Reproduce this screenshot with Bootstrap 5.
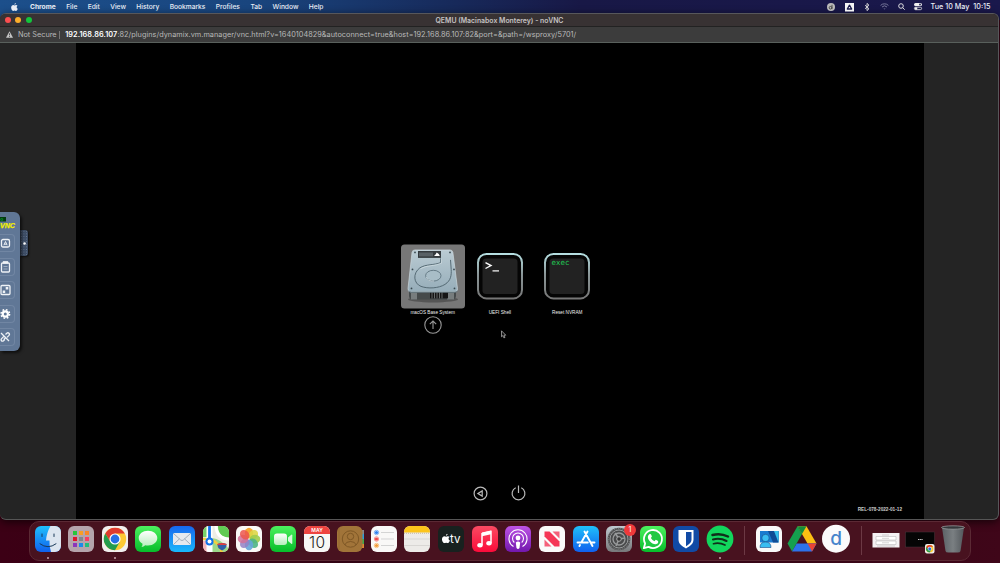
<!DOCTYPE html>
<html lang="en">
<head>
  <meta charset="UTF-8">
  <meta name="viewport" content="width=device-width, initial-scale=1.0">
  <title>QEMU (Macinabox Monterey) - noVNC</title>
  <link href="https://cdn.jsdelivr.net/npm/bootstrap@5.3.3/dist/css/bootstrap.min.css" rel="stylesheet">
  <style>
    body {
      width: 1000px;
      height: 563px;
      font-family: Inter, "Liberation Sans", sans-serif;
      background: linear-gradient(90deg, #1c4f8b 0, #19457e 25%, #172a5b 45%, #181846 58%, #1a184c 100%) 0 0 / 100% 20px no-repeat,
                  linear-gradient(90deg, #3c0015, #2e0513 50%, #3f0619);
    }
    svg { display: block; overflow: visible; }

    /* Menu bar */
    .menubar { height: 13px; font-size: 6.65px; line-height: 12px; color: #e9edf5; font-weight: 500; padding: 0 9.5px 0 11px; }
    .menus { gap: 10.45px; margin-left: 12px; padding-top: 1px; }
    .clock { font-size: 7.2px; white-space: pre; padding-top: 1px; }

    /* Browser window */
    .browser { height: 507px; width: 999px; border: 1px solid #57575b; border-left: 0; border-bottom-color: #555; border-radius: 6px; background: #242424; box-shadow: 0 2px 8px #000a; }
    .titlebar { height: 13px; background: #383233; border-bottom: 1px solid #222; font-size: 6.9px; color: #c6c3c3; font-weight: 600; }
    .titlebar .caption-text { padding-top: 2px; left: .5px; }
    .light { width: 6px; height: 6px; border-radius: 50%; }
    .urlbar { height: 16px; background: #3c3c3c; border-bottom: 1px solid #59605c; font-size: 7.3px; color: #b9b9b9; padding: 1.5px 0 0 6px; }
    .urlbar svg { margin-top: -1px; }
    .urlbar b { color: #fff; font-weight: 600; letter-spacing: .08px; }
    .url-text { letter-spacing: .04px; }

    /* noVNC control bar */
    .side { width: 76px; }
    .vnc-panel { width: 20px; height: 139px; margin-top: 169px; background: #607796; border-radius: 0 6px 6px 0; box-shadow: 2px 2px 3px #0009; position: relative; z-index: 1; }
    .vnc-btn { width: 15px; height: 18px; border: 1px solid #7186a3; border-left: 0; border-radius: 0 4px 4px 0; margin-bottom: 5.5px; }
    .vnc-handle { width: 8px; height: 26px; margin-top: 187px; border-radius: 0 3px 3px 0; background: radial-gradient(circle, #68788e 0 .5px, transparent .8px) 0 0 / 2.6px 2.6px, #3d4d66; box-shadow: 1px 1px 2px #0009; }

    /* Boot picker */
    .screen { width: 848px; background: #000; color: #ddd; }
    .picker { height: 101px; margin-top: 201px; }
    .entry { width: 67.3px; font-family: "Liberation Sans", sans-serif; font-size: 4.7px; line-height: 6px; text-align: center; color: #f0f0f0; }
    .entry-pic { height: 64px; margin-bottom: 1.5px; }
    .rel { font: 700 4.7px/6px "Liberation Sans", sans-serif; color: #ccc; }

    /* Dock */
    .dock { width: 942px; height: 40px; margin: 1px 0 0 29px; padding: 4px 0 0 .7px; background: #48121f; border: 1px solid #5b2934; border-radius: 10px; position: relative; }
    .app { width: 33.63px; height: 34px; flex: none; display: flex; justify-content: center; position: relative; }
    .app svg { width: 26px; height: 26px; }
    .app.running::after { content: ""; width: 2px; height: 2px; border-radius: 50%; background: #c9a5ae; position: absolute; top: 31px; }
    .split { width: 1px; height: 29px; background: #6c3944; flex: none; }
    .counter { width: 12px; height: 12px; border-radius: 50%; background: #f0393a; color: #fff; font-size: 7px; line-height: 12px; text-align: center; position: absolute; top: -2.5px; left: 21.5px; }
  </style>
</head>
<body class="overflow-hidden">

  <!-- Shared shapes -->
  <svg width="0" height="0" class="position-absolute">
    <defs>
      <linearGradient id="gBlue" x2="0" y2="1"><stop stop-color="#1fc0fb"/><stop offset="1" stop-color="#1060ee"/></linearGradient>
      <linearGradient id="gMail" x2="0" y2="1"><stop stop-color="#1667ee"/><stop offset="1" stop-color="#18b8fb"/></linearGradient>
      <linearGradient id="gGreen" x2="0" y2="1"><stop stop-color="#4cf15e"/><stop offset="1" stop-color="#06bd2a"/></linearGradient>
      <linearGradient id="gPod" x2="0" y2="1"><stop stop-color="#bd53e6"/><stop offset="1" stop-color="#7217ad"/></linearGradient>
      <linearGradient id="gMusic" x2="0" y2="1"><stop stop-color="#fb4a62"/><stop offset="1" stop-color="#fb0b3a"/></linearGradient>
      <linearGradient id="gBubble" x2="0" y2="1"><stop stop-color="#fff"/><stop offset="1" stop-color="#b5eebb"/></linearGradient>
      <linearGradient id="gGrey" x2="0" y2="1"><stop stop-color="#bfc9cf"/><stop offset="1" stop-color="#77787a"/></linearGradient>
      <linearGradient id="gDisk" x2="0" y2="1"><stop stop-color="#bacbd3"/><stop offset="1" stop-color="#96adb9"/></linearGradient>
      <linearGradient id="gKey" x2="0" y2="1"><stop stop-color="#b5dfe2"/><stop offset=".45" stop-color="#8b9799"/><stop offset="1" stop-color="#777"/></linearGradient>
      <linearGradient id="gTrash"><stop stop-color="#5b6165"/><stop offset=".5" stop-color="#7a7f82"/><stop offset="1" stop-color="#53585c"/></linearGradient>
      <clipPath id="tile"><rect width="26" height="26" rx="6"/></clipPath>
      <symbol id="apple" viewBox="0 0 14 16">
        <path fill="currentColor" d="M9.800 0c.1 1.600-1.200 3.300-2.800 3.400C6.800 1.800 8.200.2 9.800 0zM13 5.400c-2.500 1.600-2 4.900.6 5.900-.7 2-2.100 4.500-3.700 4.600-1.100 0-1.500-.7-2.800-.7s-1.800.7-2.800.7C2.100 15.900.2 12 .3 9.200.4 6 2.400 4.200 4.500 4.200c1.100 0 2 .8 2.700.8.6 0 1.900-.9 3.200-.8 1 0 2 .4 2.600 1.200z"/>
      </symbol>
      <symbol id="chrome" viewBox="-12 -12 24 24">
        <circle r="11.500" fill="#fcc934"/>
        <path fill="#de3b2f" d="M0-5.600H10A11.500 11.500 0 0 0-9.960-5.750L-4.800 2.800z"/>
        <path fill="#249c4e" d="M-9.960-5.750A11.500 11.500 0 0 0 0 11.500L4.900 2.900 0 3.500-4.800 2.800z"/>
        <circle r="5.700" fill="#fff"/><circle r="4.500" fill="#276fe6"/>
      </symbol>
    </defs>
  </svg>

  <!-- Menu bar -->
  <nav class="menubar d-flex align-items-center">
    <svg width="7" height="8"><use href="#apple" width="7" height="8"/></svg>
    <div class="menus d-flex">
      <span class="fw-bold">Chrome</span><span>File</span><span>Edit</span><span>View</span><span>History</span><span>Bookmarks</span><span>Profiles</span><span>Tab</span><span>Window</span><span>Help</span>
    </div>
    <div class="ms-auto d-flex align-items-center">
      <svg width="8" height="8" viewBox="0 0 8 8"><circle cx="4" cy="4" r="4" fill="#b9b9b9"/><circle cx="3.500" cy="4.700" r="1.300" fill="none" stroke="#333" stroke-width=".8"/><path d="M5 1.800v4.300" stroke="#333" stroke-width=".8"/></svg>
      <svg width="9" height="8" viewBox="0 0 9 8" style="margin-left:10px"><rect width="9" height="8.500" fill="#f4f4f4"/><path d="M4.500 2.200 6.700 6H2.300z" fill="none" stroke="#18184a" stroke-width="1.300" stroke-linejoin="round"/></svg>
      <svg width="6" height="8" viewBox="0 0 6 8" style="margin-left:10px"><path d="M1 2.200 5 5.800 3 7.600V.4L5 2.200 1 5.800" fill="none" stroke="#ddd" stroke-width=".9"/></svg>
      <svg width="9" height="7" viewBox="0 0 9 7" style="margin-left:10px" fill="none" stroke="#77779a"><path d="M.6 2.400a5.600 5.600 0 0 1 7.800 0M2 4a3.600 3.600 0 0 1 5 0"/><path d="M3.400 5.400h2.200L4.500 6.600z" fill="#77779a" stroke="none"/></svg>
      <svg width="7" height="7" viewBox="0 0 7 7" style="margin-left:9px" fill="none" stroke="#eee" stroke-width=".9"><circle cx="3" cy="3" r="2.300"/><path d="m4.700 4.700 2 2"/></svg>
      <svg width="8" height="7" viewBox="0 0 8 7" style="margin-left:9px"><rect width="8" height="3" rx="1.500" fill="#eee"/><circle cx="6" cy="1.500" r=".9" fill="#18184a"/><rect x=".4" y="4.200" width="7.200" height="2.500" rx="1.200" fill="none" stroke="#eee" stroke-width=".8"/><circle cx="2" cy="5.500" r="1.300" fill="#eee"/></svg>
      <span class="clock" style="margin-left:8.300px">Tue 10 May  10:15</span>
    </div>
  </nav>

  <!-- Browser window -->
  <main class="browser overflow-hidden">
    <div class="titlebar d-flex align-items-center position-relative">
      <div class="d-flex" style="gap:4.500px;margin-left:4.500px">
        <div class="light" style="background:#fc4e50"></div>
        <div class="light" style="background:#fdae2b"></div>
        <div class="light" style="background:#12c53c"></div>
      </div>
      <div class="caption-text position-absolute w-100 text-center">QEMU (Macinabox Monterey) - noVNC</div>
    </div>
    <div class="urlbar d-flex align-items-center text-nowrap">
      <svg width="7" height="7" viewBox="0 0 7 7"><path d="M3.500.2 7 6.700H0z" fill="#c5c5c5"/><path d="M3.500 2.300v2M3.500 5v.9" stroke="#3c3c3c" stroke-width=".8"/></svg>
      <span class="ns-label" style="margin-left:5px">Not Secure</span>
      <span style="margin:0 5px 0 2.500px;width:1px;height:8px;background:#777"></span>
      <span class="url-text"><b>192.168.86.107</b>:82/plugins/dynamix.vm.manager/vnc.html?v=1640104829&amp;autoconnect=true&amp;host=192.168.86.107:82&amp;port=&amp;path=/wsproxy/5701/</span>
    </div>

    <div class="d-flex" style="height:476px">
      <div class="side d-flex align-items-start">
        <div class="vnc-panel">
          <svg width="15" height="22" viewBox="0 0 15 22">
            <rect y="5" width="6" height="4.500" fill="#033c10"/>
            <text x=".3" y="8.700" font-family="Liberation Sans" font-weight="700" font-size="5" fill="#0a9a30">o</text>
            <text x="0" y="15.600" font-family="Liberation Sans" font-style="italic" font-weight="700" font-size="8" textLength="15" lengthAdjust="spacingAndGlyphs" fill="#f4f000" stroke="#f4f000" stroke-width=".25">VNC</text>
          </svg>
          <div class="vnc-btn"><svg width="13" height="18" viewBox="0 0 13 18" fill="none" stroke="#eef2f6" stroke-width="1.300"><rect x="1.500" y="4.500" width="8" height="7.500" rx="1.500"/><path d="M3.900 10.200 5.500 6.500l1.600 3.700M4.500 9.200h2" stroke-width="1"/></svg></div>
          <div class="vnc-btn"><svg width="13" height="18" viewBox="0 0 13 18" fill="none" stroke="#eef2f6" stroke-width="1.300"><rect x="1.500" y="4" width="8" height="9" rx="1"/><path d="M3.500 4V2.800h4V4z" fill="#eef2f6"/><path d="M3.500 7.500h4M3.500 10h4" stroke="#afbdcd" stroke-width=".8"/></svg></div>
          <div class="vnc-btn"><svg width="13" height="18" viewBox="0 0 13 18" fill="none" stroke="#eef2f6" stroke-width="1.300"><rect x="1" y="3.500" width="9" height="9" rx="1"/><path d="M5.700 5h2.600v2.500H5.700zM2.700 8.500h2.500V11H2.700z" fill="#eef2f6" stroke="none"/></svg></div>
          <div class="vnc-btn"><svg width="13" height="18" viewBox="0 0 13 18" fill="none" stroke="#fff"><circle cx="5.300" cy="8" r="2.600" stroke-width="2.200"/><circle cx="5.300" cy="8" r="4.300" stroke-width="1.500" stroke-dasharray="1.700 1.680"/></svg></div>
          <div class="vnc-btn"><svg width="13" height="18" viewBox="0 0 13 18" fill="none" stroke="#eef2f6" stroke-width="1.300"><path d="m5.500 5.500 1.300-1.300c1.500-1.300 3.500.7 2.200 2.200L7 8.400M4.800 10.500l-1.300 1.300C2 13.100.3 11.100 1.600 9.600l2-2M1 4l8 8M6 8.500 3.700 10.500"/></svg></div>
        </div>
        <div class="vnc-handle d-flex align-items-center justify-content-center"><svg width="3" height="3"><circle cx="1.500" cy="1.500" r="1.300" fill="#fff"/></svg></div>
      </div>

      <div class="screen d-flex flex-column">
        <!-- Boot entries -->
        <div class="picker d-flex" style="margin-left:323px">
          <div class="entry">
            <div class="entry-pic d-flex justify-content-center">
              <svg width="64" height="64" viewBox="0 -.4 64 64">
                <rect width="64" height="64" rx="3.500" fill="#777"/>
                <ellipse cx="32" cy="55" rx="25" ry="3" fill="#555"/>
                <path d="M8 44h47v7q0 4-4 4H12q-4 0-4-4z" fill="#454a4b"/>
                <path d="M10 48h6v7h-6zM46 48h7v7h-7z" fill="#777d7e"/>
                <path d="M29 47h18v7H29z" fill="#151515"/>
                <path d="M31 47v7m2.500-7v7m2.500-7v7m2.500-7v7m2.500-7v7" stroke="#7b8282" stroke-width=".8"/>
                <path d="M14 5.500h35q2.500 0 2.900 2.500L56.500 44q.4 3.500-2.500 3.500H9.500Q6.700 47.500 7 44L11 8q.3-2.500 3-2.500z" fill="url(#gDisk)" stroke="#d5e1e5" stroke-width=".6"/>
                <path d="M7.500 46.500q1 1.300 3 1.300H54q2 0 2.400-1.500" fill="none" stroke="#5d7079"/>
                <path d="M17 6.500h23v7H17z" fill="#343a3e"/><path d="M18 8h14v4H18z" fill="#596166"/><path d="M33 11.700q2-2 2.700-3.700 2.800 1 3 3.700z" fill="#fff"/>
                <path d="M39.700 14v4.200C33 21 25 19.500 18.800 23.500 11.500 29 12.500 39 20 42c7 2.500 17.500 2 24-2 6-4 6.500-9 6.200-15l-.7-9.500" fill="none" stroke="#4c616b" stroke-width=".9"/>
                <path d="M40.500 14v4.700C33.500 22 25.500 20.500 19.500 24.300" fill="none" stroke="#e4eef1" stroke-width=".5"/>
                <ellipse cx="32.300" cy="31.300" rx="7.700" ry="5.400" fill="#a8bdc7" stroke="#566b76" stroke-width=".8"/>
                <path d="M25 32.500q2 4.800 8 4.200" fill="none" stroke="#e5eff2" stroke-width=".6"/>
                <g fill="#394950"><circle cx="14" cy="8" r=".9"/><circle cx="49" cy="8" r=".9"/><circle cx="11.500" cy="25" r=".9"/><circle cx="53" cy="25" r=".9"/><circle cx="10.500" cy="44" r=".9"/><circle cx="53.500" cy="44" r=".9"/></g>
              </svg>
            </div>
            <div>macOS Base System</div>
            <svg class="mx-auto" width="18" height="18" viewBox="0 0 18 18" fill="none" stroke="#999" stroke-width="1.100" style="margin-top:.5px"><circle cx="9" cy="9" r="8.200"/><path d="M9 13V5M5.800 8.200 9 5l3.200 3.200"/></svg>
          </div>
          <div class="entry">
            <div class="entry-pic d-flex justify-content-center">
              <svg width="64" height="64" viewBox="0 -.4 64 64">
                <rect x="10" y="9.500" width="44" height="44.500" rx="8.500" fill="#050505" stroke="url(#gKey)" stroke-width="2"/>
                <rect x="14.500" y="14" width="35" height="35.500" rx="3.500" fill="#222"/>
                <path d="m17.500 18.300 5.500 2.900-5.500 2.900" fill="none" stroke="#fff" stroke-width="1.400"/><path d="M24.500 26.500h6.500" stroke="#fff" stroke-width="1.200"/>
              </svg>
            </div>
            <div>UEFI Shell</div>
          </div>
          <div class="entry">
            <div class="entry-pic d-flex justify-content-center">
              <svg width="64" height="64" viewBox="0 -.4 64 64">
                <rect x="10" y="9.500" width="44" height="44.500" rx="8.500" fill="#050505" stroke="url(#gKey)" stroke-width="2"/>
                <rect x="14.500" y="14" width="35" height="35.500" rx="3.500" fill="#222"/>
                <text x="16.500" y="20.700" font-family="DejaVu Sans Mono" font-size="7.400" fill="#20cd55" textLength="18">exec</text>
              </svg>
            </div>
            <div>Reset NVRAM</div>
          </div>
        </div>

        <!-- Mouse pointer over the guest screen -->
        <svg class="position-absolute" width="6" height="9" viewBox="0 0 6 9" style="left:501px;top:329.500px"><path d="M.5.8v6l1.400-1.200 1 2.300 1.100-.5L3 5.200h1.800z" fill="#111" stroke="#bbb" stroke-width=".7"/></svg>

        <!-- Restart and power -->
        <div class="mt-auto d-flex" style="gap:23px;margin-left:397px">
          <svg width="15" height="15" viewBox="0 0 15 15" fill="none" stroke="#bbb" stroke-width="1.200"><circle cx="7.500" cy="7.500" r="6.400"/><path d="M9.200 4.900v5.200L4.900 7.500z"/></svg>
          <svg width="15" height="15" viewBox="0 0 15 15" fill="none" stroke="#bbb" stroke-width="1.200"><path d="M4.700 1.700a6.400 6.400 0 1 0 5.600 0M7.500-.5v7.500"/></svg>
        </div>
        <div class="rel text-end" style="margin:6px 22px 6.500px 0">REL-078-2022-01-12</div>
      </div>
    </div>
  </main>

  <!-- Dock -->
  <footer class="dock d-flex">
    <div class="app running"><svg viewBox="0 0 26 26"><g clip-path="url(#tile)"><rect width="26" height="26" fill="url(#gBlue)"/><path d="M15.500 0Q11.500 7 11 14.500h3.500Q14 20 16 26h10V0z" fill="#dce5ef"/></g><path d="M7 8v2.500M19 8v2.500M5 17.800q8 6 16 0" fill="none" stroke="#193957" stroke-width="1" stroke-linecap="round"/></svg></div>
    <div class="app"><svg viewBox="0 0 26 26"><rect width="26" height="26" rx="6" fill="#b5a4ac"/><g><path fill="#27c73b" d="M5 5h4v4H5z"/><path fill="#f79e25" d="M11 5h4v4h-4z"/><path fill="#fa8627" d="M17 5h4v4h-4z"/><path fill="#e0142e" d="M5 11h4v4H5z"/><path fill="#80868e" d="M11 11h4v4h-4z"/><path fill="#f73f64" d="M17 11h4v4h-4z"/><path fill="#8c36bb" d="M5 17h4v4H5z"/><path fill="#1b8bea" d="M11 17h4v4h-4z"/><path fill="#22bd7c" d="M17 17h4v4h-4z"/></g></svg></div>
    <div class="app running"><svg viewBox="0 0 26 26"><rect width="26" height="26" rx="6" fill="#f1efee"/><use href="#chrome" x="1.300" y="1.300" width="23.400" height="23.400"/></svg></div>
    <div class="app"><svg viewBox="0 0 26 26"><rect width="26" height="26" rx="6" fill="url(#gGreen)"/><path d="M13 4.700c5.200 0 9.300 3.200 9.300 7.400s-4.100 7.500-9.300 7.500q-1.500 0-2.800-.4-1.600 1.600-3.700 1.700 1.200-1.300 1-3.200-3.800-2-3.800-5.600C3.700 7.900 7.800 4.700 13 4.700z" fill="url(#gBubble)"/></svg></div>
    <div class="app"><svg viewBox="0 0 26 26"><rect width="26" height="26" rx="6" fill="url(#gMail)"/><rect x="4" y="7" width="18" height="12" rx="1.500" fill="#e4e9ee"/><path d="m4.500 7.500 7.200 6.500q1.300 1 2.600 0l7.200-6.500M4.500 18.500l6-5.700M21.500 18.500l-6-5.700" fill="none" stroke="#8d9eaf" stroke-width=".8"/></svg></div>
    <div class="app"><svg viewBox="0 0 26 26"><g clip-path="url(#tile)"><rect width="26" height="26" fill="#eeede5"/><path d="M15 0h11v12Q15 11 15 0z" fill="#61ca53"/><path d="M9 12q9 1 17 11v3H9z" fill="#9bd88a"/><path d="M0 15h6v11H0z" fill="#f6b6bb"/><path d="M0 0h4v11H0z" fill="#77d26a"/><path d="M13-1q0 14 14 14" fill="none" stroke="#fff" stroke-width="3"/><path d="M0 13q15-1 19 14" fill="none" stroke="#f4cf3f" stroke-width="2.500"/><path d="M6.500 0v26" stroke="#fff" stroke-width="6"/><path d="M6.500 0v15" stroke="#1473e9" stroke-width="2.800"/><circle cx="6.500" cy="15.500" r="4" fill="#1473e9"/><circle cx="6.500" cy="15.500" r="2" fill="#fff"/><path d="M14.500 18q4.500-2 9 0 .5 4.500-4.500 6.500-5-2-4.500-6.500z" fill="#305fa8"/><path d="M14.500 18q4.500-2 9 0v1h-9z" fill="#dd4040"/></g></svg></div>
    <div class="app"><svg viewBox="0 0 26 26"><rect width="26" height="26" rx="6" fill="#faf9f7"/><g opacity=".9"><ellipse cx="13" cy="7" rx="4.200" ry="5.300" fill="#f6a023"/><ellipse cx="13" cy="7" rx="4.200" ry="5.300" fill="#dcd334" transform="rotate(45 13 13)" opacity=".9"/><ellipse cx="13" cy="7" rx="4.200" ry="5.300" fill="#96c83b" transform="rotate(90 13 13)" opacity=".9"/><ellipse cx="13" cy="7" rx="4.200" ry="5.300" fill="#3cad79" transform="rotate(135 13 13)" opacity=".9"/><ellipse cx="13" cy="7" rx="4.200" ry="5.300" fill="#579cd6" transform="rotate(180 13 13)" opacity=".9"/><ellipse cx="13" cy="7" rx="4.200" ry="5.300" fill="#8875c1" transform="rotate(225 13 13)" opacity=".85"/><ellipse cx="13" cy="7" rx="4.200" ry="5.300" fill="#cf638f" transform="rotate(270 13 13)" opacity=".85"/><ellipse cx="13" cy="7" rx="4.200" ry="5.300" fill="#ec463c" transform="rotate(315 13 13)" opacity=".85"/></g></svg></div>
    <div class="app"><svg viewBox="0 0 26 26"><rect width="26" height="26" rx="6" fill="url(#gGreen)"/><rect x="4" y="7.500" width="13" height="11.500" rx="3" fill="url(#gBubble)"/><path d="m18 11.500 3.300-2.800q1-.6 1 .5v8q0 1.100-1 .5L18 15z" fill="#d8f8dc"/></svg></div>
    <div class="app"><svg viewBox="0 0 26 26"><g clip-path="url(#tile)"><rect width="26" height="26" fill="#f8f7f5"/><rect width="26" height="8" fill="#ee4440"/></g><text x="13" y="6.300" text-anchor="middle" font-size="5" font-weight="600" fill="#fff">MAY</text><text x="13" y="21.500" text-anchor="middle" font-size="15.500" font-weight="300" textLength="16" fill="#222">10</text></svg></div>
    <div class="app"><svg viewBox="0 0 26 26"><path d="M20 4h7v4h-7z" fill="#888"/><path d="M20 8h7v5h-7z" fill="#2b9fd8"/><path d="M20 13h7v5h-7z" fill="#43a94b"/><path d="M20 18h7v4h-7z" fill="#e08731"/><rect width="25.500" height="26" rx="6" fill="#a17439"/><path d="M2 2v22" stroke="#8d622c" stroke-width=".7"/><g fill="none" stroke="#795323" stroke-width=".9"><circle cx="13.500" cy="13" r="8.200"/><circle cx="13.500" cy="10.500" r="3.200"/><path d="M7.800 19q1-3.500 5.700-3.500t5.700 3.500"/></g></svg></div>
    <div class="app"><svg viewBox="0 0 26 26"><rect width="26" height="26" rx="6" fill="#f9f8f7"/><path d="M10 6.500h13M10 13h13M10 19.500h13" stroke="#c4c4c4" stroke-width=".7"/><g stroke-width=".6" fill="#fff"><circle cx="5.500" cy="6.500" r="2.200" stroke="#2e80ef"/><circle cx="5.500" cy="13" r="2.200" stroke="#ee4646"/><circle cx="5.500" cy="19.500" r="2.200" stroke="#f39a36"/></g><circle cx="5.500" cy="6.500" r="1.600" fill="#2e80ef"/><circle cx="5.500" cy="13" r="1.600" fill="#ee4646"/><circle cx="5.500" cy="19.500" r="1.600" fill="#f39a36"/></svg></div>
    <div class="app"><svg viewBox="0 0 26 26"><g clip-path="url(#tile)"><rect width="26" height="26" fill="#edebe8"/><rect width="26" height="6.500" fill="#fcc41b"/><path d="M0 7.300h26" stroke="#b8a987" stroke-width=".7" stroke-dasharray="1 1"/><path d="M0 13h26M0 19.500h26" stroke="#cbc9c6" stroke-width=".6"/></g></svg></div>
    <div class="app"><svg viewBox="0 0 26 26"><rect width="26" height="26" rx="6" fill="#18211f"/><use href="#apple" x="3.700" y="7.800" width="8.500" height="9.500" color="#fff"/><text x="12" y="17.300" font-size="11.500" fill="#fff" textLength="10.500">tv</text></svg></div>
    <div class="app"><svg viewBox="0 0 26 26"><rect width="26" height="26" rx="6" fill="url(#gMusic)"/><path d="M10 19V7.500L19 5.500V17" fill="none" stroke="#fff" stroke-width="1.500"/><path d="M10 6.500 19 4.500v3.700l-9 2z" fill="#fff"/><ellipse cx="8" cy="19.200" rx="2.700" ry="2.200" fill="#fff"/><ellipse cx="17" cy="17.200" rx="2.700" ry="2.200" fill="#fff"/></svg></div>
    <div class="app"><svg viewBox="0 0 26 26"><rect width="26" height="26" rx="6" fill="url(#gPod)"/><g fill="none" stroke="#fff" stroke-width="1.100"><path d="M8.500 20.600a9 9 0 1 1 9 0"/><path d="M9.300 16.500a5.500 5.500 0 1 1 7.400 0"/></g><circle cx="13" cy="12" r="2.400" fill="#fff"/><path d="M10.800 16.500q2.200-1.800 4.400 0l-.7 5.500q-1.500 1.800-3 0z" fill="#fff"/></svg></div>
    <div class="app"><svg viewBox="0 0 26 26"><rect width="26" height="26" rx="6" fill="#fafafa"/><path d="M5.500 5.500h5l10 10v5h-5l-10-10z" fill="#f53656"/><path d="M13.500 5.500h7V12.500zM5.500 13.500v7h7z" fill="#f4607a"/></svg></div>
    <div class="app"><svg viewBox="0 0 26 26"><rect width="26" height="26" rx="6" fill="url(#gBlue)"/><g stroke="#fff" stroke-width="1.900" stroke-linecap="round"><path d="m14.500 5.500-6.200 11M11.500 5.500 19.500 20M4.500 16.500h10.300M18.500 16.500h3M7 19l-.6 1"/></g></svg></div>
    <div class="app"><svg viewBox="0 0 26 26"><rect width="26" height="26" rx="6" fill="url(#gGrey)"/><circle cx="13" cy="13" r="11.300" fill="#4a4b4c"/><g fill="none" stroke="#999b9c"><circle cx="13" cy="13" r="9" stroke-width="1"/><circle cx="13" cy="13" r="10.500" stroke-width=".8" stroke-dasharray="1 1"/><circle cx="13" cy="13" r="6" stroke-width="1.300"/><path d="m13 13 6-1M13 13 9 7M13 13 10 20" stroke-width="1.500"/></g><circle cx="13" cy="13" r="2.300" fill="#333" stroke="#aaa"/></svg><div class="counter">1</div></div>
    <div class="app"><svg viewBox="0 0 26 26"><rect width="26" height="26" rx="6" fill="url(#gGreen)"/><path d="m3.800 22.200 1.300-4.800a9 9 0 1 1 3.500 3.500z" fill="#21c944" stroke="#fff" stroke-width="1.800" stroke-linejoin="round"/><path d="M9.200 8.300q1.400-1 2 .5l.7 1.800-1 1.400q1.300 2.300 3.600 3.200l1.300-1.400 2.300 1.100q.7 2.600-2.400 3.300c-4 .2-8.800-5-7.700-8.300z" fill="#fff"/></svg></div>
    <div class="app"><svg viewBox="0 0 26 26"><rect width="26" height="26" rx="6" fill="#114aa5"/><path d="M5.500 4h15v9.500c0 4.500-3.500 6.500-7.500 9-4-2.500-7.500-4.500-7.500-9z" fill="#fff"/><path d="M13 6h5.500v7.500c0 3-2.500 4.800-5.500 6.700z" fill="#114aa5"/></svg></div>
    <div class="app running"><svg viewBox="0 0 26 26"><circle cx="13" cy="13" r="13.400" fill="#12d65d"/><g fill="none" stroke="#102e1b" stroke-linecap="round"><path d="M5.500 9q8-2.300 15.500 1.500" stroke-width="2.500"/><path d="M6 13.500q7-1.900 13.500 1.500" stroke-width="2.100"/><path d="M6.500 17.700q6-1.500 11.500 1.400" stroke-width="1.700"/></g></svg></div>
    <div class="split" style="margin:0 7px"></div>
    <div class="app"><svg viewBox="0 0 26 26"><rect width="26" height="26" rx="6" fill="#f9f9f9"/><path d="M4 5h18.500v11.500H4z" fill="#197bd0"/><path d="M12 5h10.500v11.500H17z" fill="#0f4b95"/><path d="m18 5h4.500v11.500z" fill="#35c0ec"/><circle cx="9.500" cy="12" r="3.700" fill="#39bdf1" stroke="#174a86" stroke-width=".6"/><path d="M4 21.500q0-5.500 5.500-5.500t5.500 5.500z" fill="#39bdf1" stroke="#174a86" stroke-width=".6"/></svg></div>
    <div class="app"><svg viewBox="0 0 26 26"><path d="M8.500.2h9l10 17.300h-9z" fill="#fbbf13"/><path d="M8.500.2h9L13 8z" fill="#148b3c"/><path d="M8.500.2 13 8 3 25.500-1.500 17.500z" fill="#15a04e"/><path d="M7.700 17.500h19.800L23 25.500H3z" fill="#2d72eb"/><path d="M18.500 17.500h9L23 25.500z" fill="#e94335"/></svg></div>
    <div class="app"><svg viewBox="0 0 26 26"><circle cx="13" cy="12.700" r="14" fill="#fbfbfb"/><text x="13" y="19.300" text-anchor="middle" font-size="19" font-weight="500" fill="#4684cc">d</text></svg></div>
    <div class="split" style="margin:0 7.500px 0 8.100px"></div>
    <div class="app"><svg viewBox="0 0 26 26"><rect x="-.5" y="7" width="27" height="14.500" fill="#f4f1f3"/><path d="M3 10.500h20v3.500H3zM3 15h20v3.500H3z" fill="#fff" stroke="#bbb" stroke-width=".6"/><path d="M9 9h7M9 12.300h7M9 16.800h7M4 20h18" stroke="#aaa" stroke-width=".5"/></svg></div>
    <div class="app"><svg viewBox="0 0 26 26"><rect x="-1.500" y="6" width="29" height="15" fill="#050505" stroke="#47373c" stroke-width=".5"/><path d="M11 13.500h1.200m.5 0h1.200m.5 0h1.200" stroke="#ccc" stroke-width="1"/><rect x="18" y="18" width="9.500" height="9.500" rx="2" fill="#eee"/><use href="#chrome" x="18.700" y="18.700" width="8" height="8"/></svg></div>
    <div class="app"><svg viewBox="0 0 26 26"><path d="M2 1.500h22L20.500 25q-.3 1.500-3 1.500h-9q-2.700 0-3-1.500z" fill="url(#gTrash)"/><ellipse cx="13" cy="1.500" rx="11.500" ry="1.700" fill="#35383b" stroke="#a4a7a9" stroke-width=".7"/></svg></div>
  </footer>

  <script src="https://cdn.jsdelivr.net/npm/bootstrap@5.3.3/dist/js/bootstrap.bundle.min.js"></script>
</body>
</html>
